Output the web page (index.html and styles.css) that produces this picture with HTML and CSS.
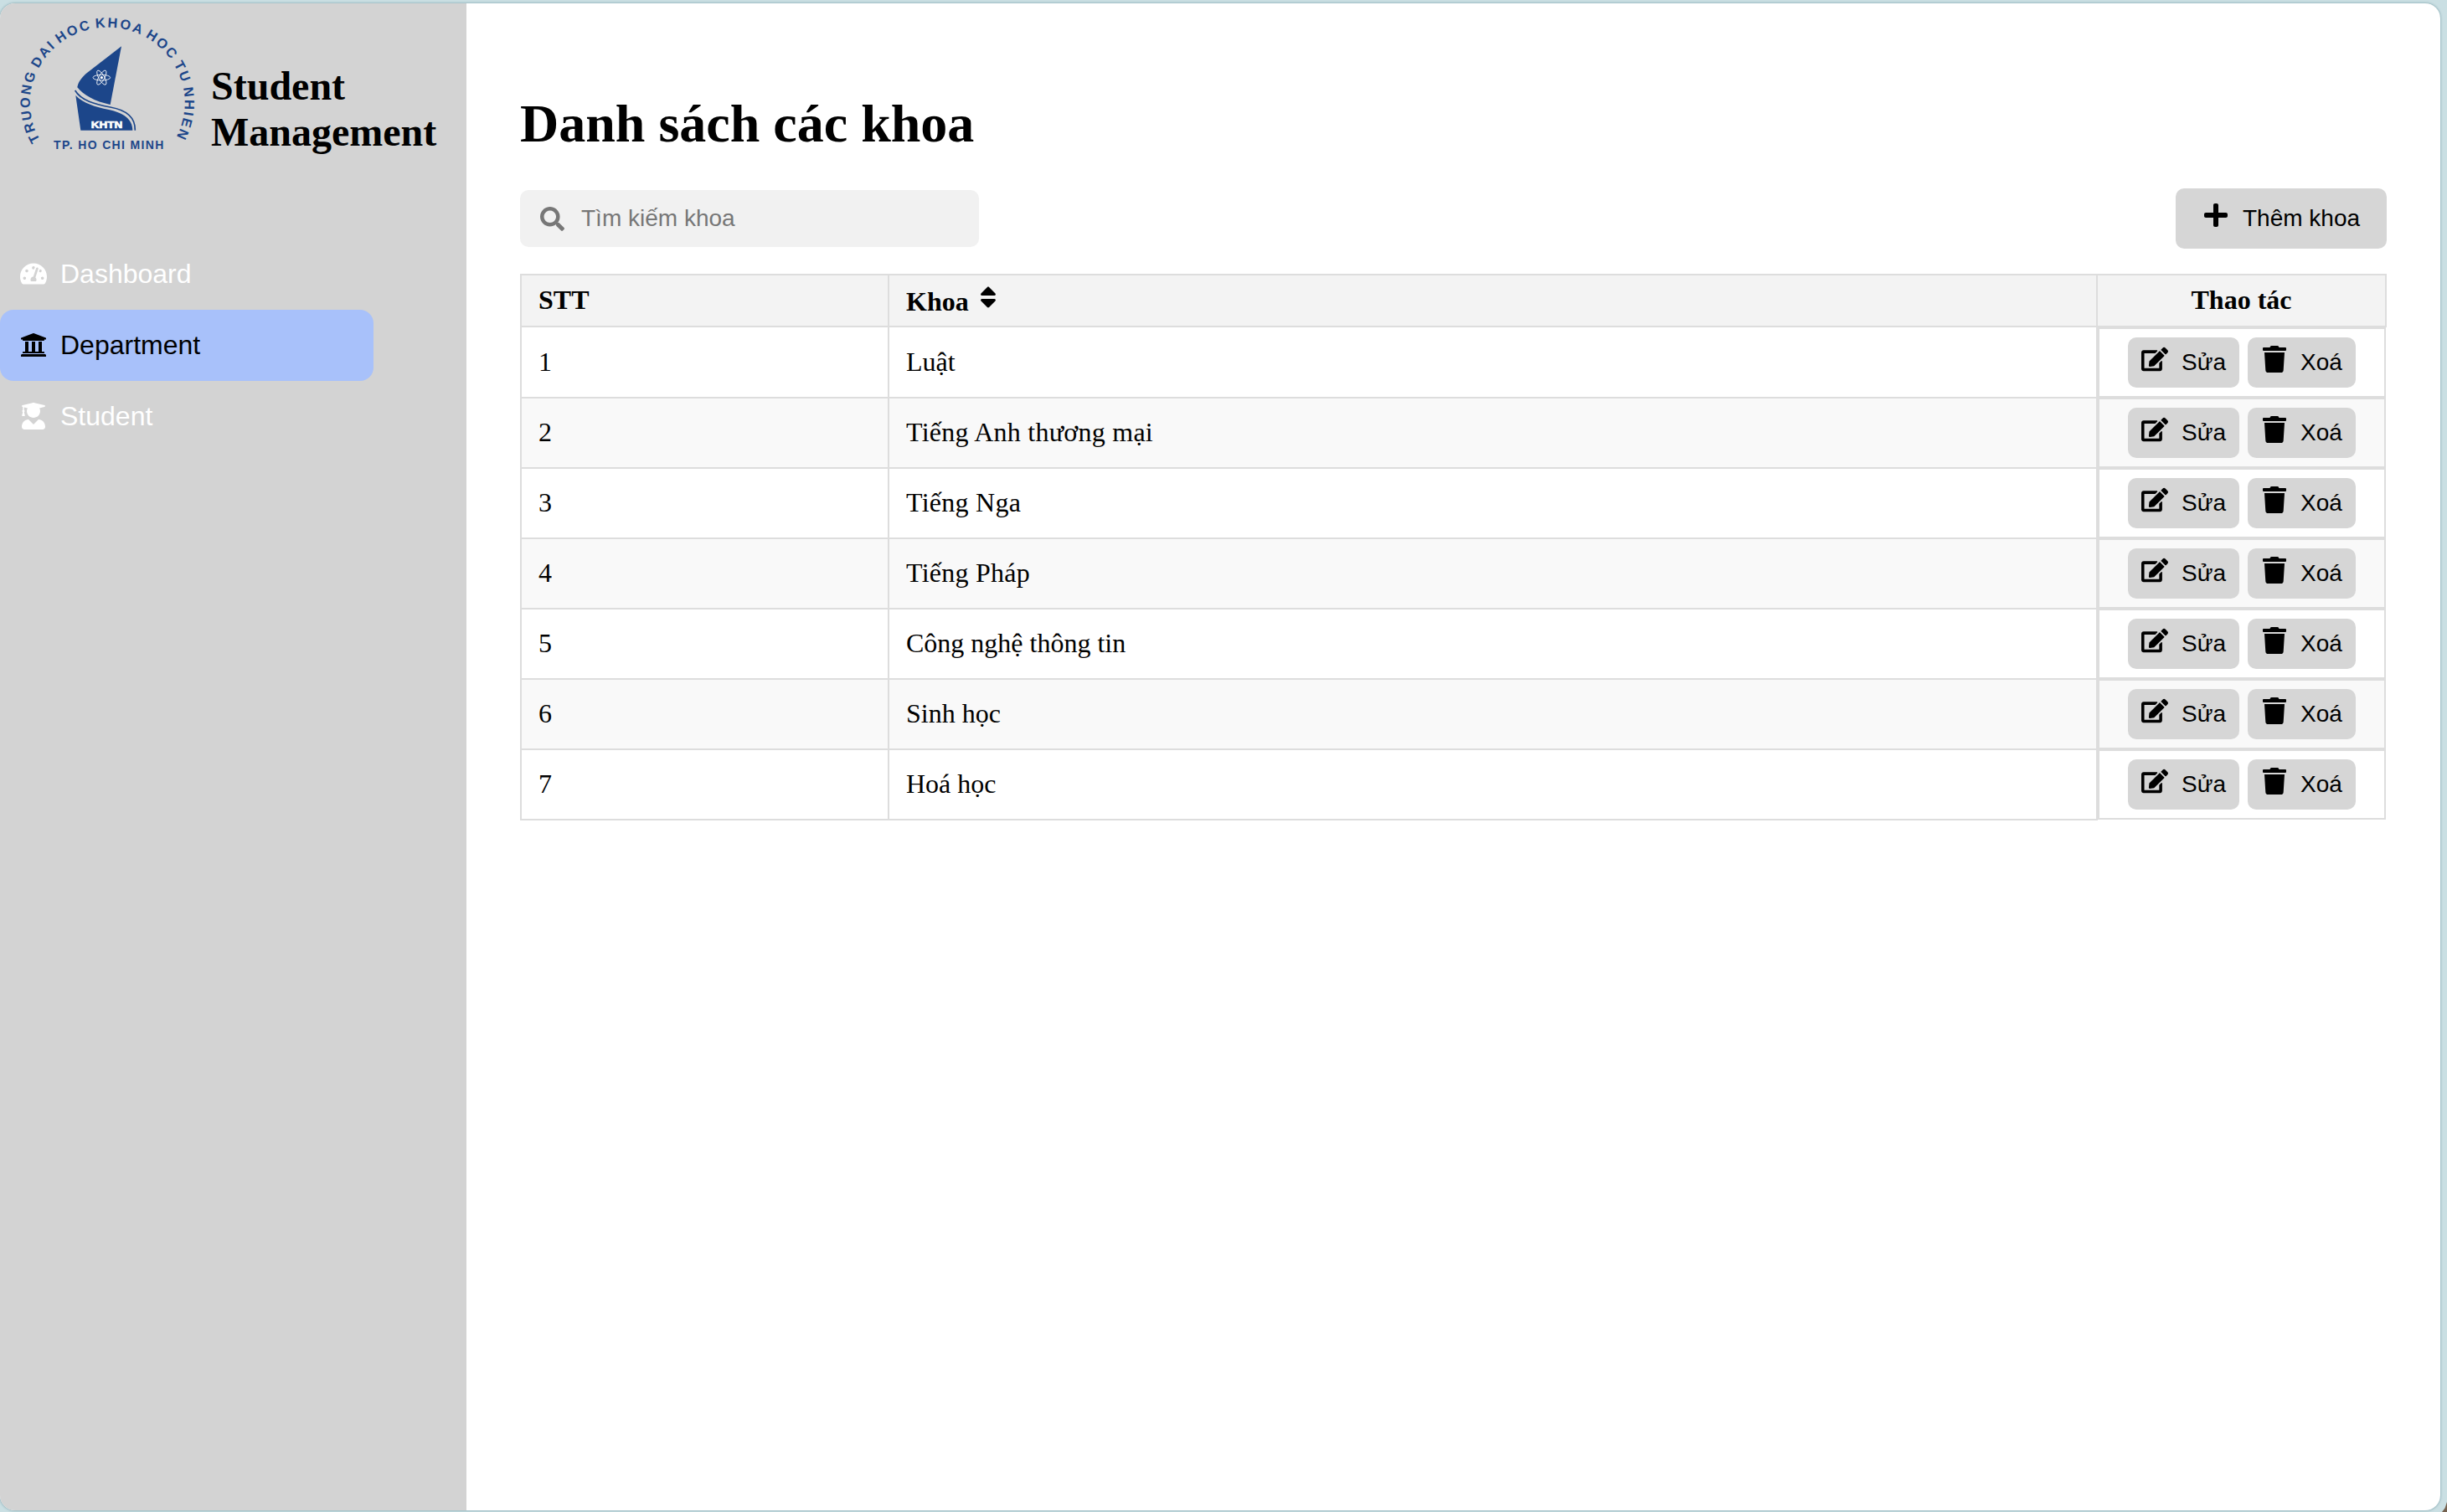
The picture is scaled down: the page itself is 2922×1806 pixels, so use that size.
FILE: index.html
```html
<!DOCTYPE html>
<html lang="vi">
<head>
<meta charset="utf-8">
<title>Student Management</title>
<link rel="stylesheet" href="styles.css">
</head>
<body>
<svg class="sprite" aria-hidden="true">
  <symbol id="gauge" viewBox="0 0 576 512"><path d="M288 32C128.94 32 0 160.94 0 320c0 52.8 14.25 102.26 39.06 144.8 5.61 9.62 16.3 15.2 27.44 15.2h443c11.14 0 21.83-5.58 27.44-15.2C561.75 422.26 576 372.8 576 320c0-159.06-128.94-288-288-288zm0 64c14.71 0 26.58 10.13 30.32 23.65-1.11 2.26-2.64 4.23-3.45 6.67l-9.22 27.67c-5.13 3.49-10.97 6.01-17.64 6.01-17.67 0-32-14.33-32-32S270.33 96 288 96zM96 384c-17.67 0-32-14.33-32-32s14.33-32 32-32 32 14.33 32 32-14.33 32-32 32zm48-160c-17.67 0-32-14.33-32-32s14.33-32 32-32 32 14.33 32 32-14.33 32-32 32zm246.77-72.41l-61.33 184C343.13 347.33 352 364.54 352 384c0 11.72-3.38 22.55-8.88 32H232.88c-5.5-9.45-8.88-20.28-8.88-32 0-33.94 26.5-61.43 59.9-63.59l61.34-184.01c4.17-12.56 17.73-19.45 30.36-15.17 12.57 4.19 19.35 17.79 15.17 30.36zm14.66 57.2l15.52-46.55c3.47-1.29 7.13-2.23 11.05-2.23 17.67 0 32 14.33 32 32s-14.33 32-32 32c-11.38-.01-20.89-6.28-26.57-15.22zM480 384c-17.67 0-32-14.33-32-32s14.33-32 32-32 32 14.33 32 32-14.33 32-32 32z"/></symbol>
  <symbol id="university" viewBox="0 0 512 512"><path d="M496 128v16a8 8 0 0 1-8 8h-24v12c0 6.627-5.373 12-12 12H60c-6.627 0-12-5.373-12-12v-12H24a8 8 0 0 1-8-8v-16a8 8 0 0 1 4.941-7.392l232-88a7.996 7.996 0 0 1 6.118 0l232 88A8 8 0 0 1 496 128zm-24 304H40c-13.255 0-24 10.745-24 24v16a8 8 0 0 0 8 8h464a8 8 0 0 0 8-8v-16c0-13.255-10.745-24-24-24zM96 192v192H60c-6.627 0-12 5.373-12 12v20h416v-20c0-6.627-5.373-12-12-12h-36V192h-64v192h-64V192h-64v192h-64V192H96z"/></symbol>
  <symbol id="graduate" viewBox="0 0 448 512"><path d="M319.4 320.6L224 416l-95.4-95.4C57.1 323.7 0 382.2 0 454.4v9.6c0 26.5 21.5 48 48 48h352c26.5 0 48-21.5 48-48v-9.6c0-72.2-57.1-130.7-128.6-133.8zM13.6 79.8l6.4 1.5v58.4c-7 4.2-12 11.5-12 20.3 0 8.4 4.6 15.4 11.1 19.7L3.5 242c-1.7 6.9 2.1 14 7.6 14h41.8c5.5 0 9.3-7.1 7.6-14l-15.6-62.3C51.4 175.4 56 168.4 56 160c0-8.8-5-16.1-12-20.3V87.1l66 15.9c-8.6 17.2-14 36.4-14 57 0 70.7 57.3 128 128 128s128-57.3 128-128c0-20.6-5.3-39.8-14-57l96.3-23.2c18.2-4.4 18.2-27.1 0-31.5l-190.4-46c-13-3.1-26.7-3.1-39.7 0L13.6 48.2c-18.1 4.4-18.1 27.2 0 31.6z"/></symbol>
  <symbol id="search" viewBox="0 0 512 512"><path d="M505 442.7L405.3 343c-4.5-4.5-10.6-7-17-7H372c27.6-35.3 44-79.7 44-128C416 93.1 322.9 0 208 0S0 93.1 0 208s93.1 208 208 208c48.3 0 92.7-16.4 128-44v16.3c0 6.4 2.5 12.5 7 17l99.7 99.7c9.4 9.4 24.6 9.4 33.9 0l28.3-28.3c9.4-9.4 9.4-24.6.1-34zM208 336c-70.7 0-128-57.2-128-128 0-70.7 57.2-128 128-128 70.7 0 128 57.2 128 128 0 70.7-57.2 128-128 128z"/></symbol>
  <symbol id="plus" viewBox="0 0 448 512"><path d="M416 208H272V64c0-17.67-14.33-32-32-32h-32c-17.67 0-32 14.33-32 32v144H32c-17.67 0-32 14.33-32 32v32c0 17.67 14.33 32 32 32h144v144c0 17.67 14.33 32 32 32h32c17.67 0 32-14.33 32-32V304h144c17.67 0 32-14.33 32-32v-32c0-17.67-14.33-32-32-32z"/></symbol>
  <symbol id="sort" viewBox="0 0 320 512"><path d="M41 288h238c21.4 0 32.1 25.9 17 41L177 448c-9.4 9.4-24.6 9.4-33.9 0L24 329c-15.1-15.1-4.4-41 17-41zm255-105L177 64c-9.4-9.4-24.6-9.4-33.9 0L24 183c-15.1 15.1-4.4 41 17 41h238c21.4 0 32.1-25.9 17-41z"/></symbol>
  <symbol id="edit" viewBox="0 0 576 512"><path d="M402.6 83.2l90.2 90.2c3.8 3.8 3.8 10 0 13.8L274.4 405.6l-92.8 10.3c-12.4 1.4-22.9-9.1-21.5-21.5l10.3-92.8L388.8 83.2c3.8-3.8 10-3.8 13.8 0zm162-22.9l-48.8-48.8c-15.2-15.2-39.9-15.2-55.2 0l-35.4 35.4c-3.8 3.8-3.8 10 0 13.8l90.2 90.2c3.8 3.8 10 3.8 13.8 0l35.4-35.4c15.2-15.3 15.2-40 0-55.2zM384 346.2V448H64V128h229.8c3.2 0 6.2-1.3 8.5-3.5l40-40c7.6-7.6 2.2-20.5-8.5-20.5H48C21.5 64 0 85.5 0 112v352c0 26.5 21.5 48 48 48h352c26.5 0 48-21.5 48-48V306.2c0-10.7-12.9-16-20.5-8.5l-40 40c-2.2 2.3-3.5 5.3-3.5 8.5z"/></symbol>
  <symbol id="trash" viewBox="0 0 448 512"><path d="M432 32H312l-9.4-18.7A24 24 0 0 0 281.1 0H166.8a23.72 23.72 0 0 0-21.4 13.3L136 32H16A16 16 0 0 0 0 48v32a16 16 0 0 0 16 16h416a16 16 0 0 0 16-16V48a16 16 0 0 0-16-16zM53.2 467a48 48 0 0 0 47.9 45h245.8a48 48 0 0 0 47.9-45L416 128H32z"/></symbol>
</svg>
<div class="window">
  <aside class="sidebar">
    <div class="brand">
      <svg class="logo" viewBox="60 60 648 492">
        <path id="ring" d="M144 502 A277 270 0 1 1 624 504" fill="none"/>
        <text class="ring-text"><textPath href="#ring" textLength="1126" lengthAdjust="spacing">TRUONG DAI HOC KHOA HOC TU NHIEN</textPath></text>
        <path class="ink" d="M435 166 L395 375 C340 364 298 340 277 313 C279 296 291 280 308 264 Z"/>
        <path class="ink" d="M271 342 C300 372 340 382 390 393 C440 404 475 425 475 467 L289 467 Z"/>
        <path class="stripe" d="M269 324 C290 360 340 374 395 384 C452 394 485 420 484 467"/>
        <g class="atom" transform="translate(364 278)">
          <ellipse rx="31" ry="10"/>
          <ellipse rx="29" ry="10" transform="rotate(60)"/>
          <ellipse rx="29" ry="10" transform="rotate(120)"/>
          <circle r="5"/>
        </g>
        <text class="badge-text" x="326" y="459" textLength="113" lengthAdjust="spacingAndGlyphs">KHTN</text>
        <text class="city-text" x="192" y="533" textLength="394">TP. HO CHI MINH</text>
      </svg>
      <h2 class="brand-name">Student Management</h2>
    </div>
    <nav class="nav">
      <a class="nav-item"><svg class="icon"><use href="#gauge"/></svg>Dashboard</a>
      <a class="nav-item active"><svg class="icon"><use href="#university"/></svg>Department</a>
      <a class="nav-item"><svg class="icon"><use href="#graduate"/></svg>Student</a>
    </nav>
  </aside>
  <main class="main">
    <h1 class="page-title">Danh sách các khoa</h1>
    <div class="toolbar">
      <label class="search"><svg class="icon search-icon"><use href="#search"/></svg><span>Tìm kiếm khoa</span></label>
      <button class="btn add"><svg class="icon"><use href="#plus"/></svg>Thêm khoa</button>
    </div>
    <table class="table">
      <colgroup><col class="col-index"><col class="col-name"><col class="col-action"></colgroup>
      <thead>
        <tr><th>STT</th><th class="sortable">Khoa <svg class="sort-icon"><use href="#sort"/></svg></th><th class="center">Thao tác</th></tr>
      </thead>
      <tbody>
        <tr><td>1</td><td>Luật</td><td class="actions"><button class="btn edit"><svg class="icon"><use href="#edit"/></svg>Sửa</button><button class="btn remove"><svg class="icon"><use href="#trash"/></svg>Xoá</button></td></tr>
        <tr><td>2</td><td class="loose">Tiếng Anh thương mại</td><td class="actions"><button class="btn edit"><svg class="icon"><use href="#edit"/></svg>Sửa</button><button class="btn remove"><svg class="icon"><use href="#trash"/></svg>Xoá</button></td></tr>
        <tr><td>3</td><td class="loose">Tiếng Nga</td><td class="actions"><button class="btn edit"><svg class="icon"><use href="#edit"/></svg>Sửa</button><button class="btn remove"><svg class="icon"><use href="#trash"/></svg>Xoá</button></td></tr>
        <tr><td>4</td><td class="loose">Tiếng Pháp</td><td class="actions"><button class="btn edit"><svg class="icon"><use href="#edit"/></svg>Sửa</button><button class="btn remove"><svg class="icon"><use href="#trash"/></svg>Xoá</button></td></tr>
        <tr><td>5</td><td>Công nghệ thông tin</td><td class="actions"><button class="btn edit"><svg class="icon"><use href="#edit"/></svg>Sửa</button><button class="btn remove"><svg class="icon"><use href="#trash"/></svg>Xoá</button></td></tr>
        <tr><td>6</td><td>Sinh học</td><td class="actions"><button class="btn edit"><svg class="icon"><use href="#edit"/></svg>Sửa</button><button class="btn remove"><svg class="icon"><use href="#trash"/></svg>Xoá</button></td></tr>
        <tr><td>7</td><td>Hoá học</td><td class="actions"><button class="btn edit"><svg class="icon"><use href="#edit"/></svg>Sửa</button><button class="btn remove"><svg class="icon"><use href="#trash"/></svg>Xoá</button></td></tr>
      </tbody>
    </table>
  </main>
</div>
</body>
</html>
```
FILE: styles.css
```css
* { box-sizing: border-box; }
body {
  margin: 0;
  height: 1806px;
  padding: 4px 8px 2px 0;
  overflow: hidden;
  background: #cadfe3;
  font-family: "Liberation Serif", "Times New Roman", serif;
  font-size: 32px;
  color: #000;
}
/* desktop showing past the rounded browser corner */
body::after {
  content: "";
  position: absolute;
  right: 0;
  bottom: 0;
  width: 6px;
  height: 12px;
  background: #75614f;
  clip-path: polygon(100% 0, 100% 100%, 0 100%, 60% 60%);
}
.sprite { display: none; }
.icon { width: 32px; height: 32px; flex: none; fill: currentColor; }

.window {
  display: flex;
  height: 1800px;
  border-radius: 18px;
  overflow: hidden;
  background: #fff;
  box-shadow: 0 0 3px rgba(20, 80, 95, .5);
}
.sidebar {
  width: 557px;
  flex: none;
  background: #d3d3d3;
}
.brand {
  display: flex;
  gap: 16px;
  height: 281px;
  padding: 16px 19px 0 20px;
}
.logo { width: 216px; height: 164px; flex: none; overflow: visible; fill: #1c468a; }
.logo text { font-family: "Liberation Sans", Arial, sans-serif; font-weight: bold; }
.ring-text { font-size: 49px; word-spacing: -8px; }
.city-text { font-size: 42px; }
.logo .badge-text { font-size: 35px; font-weight: bold; fill: #fff; stroke: #fff; stroke-width: 2; }
.stripe { fill: none; stroke: #1c468a; stroke-width: 5; }
.atom ellipse { fill: none; stroke: #fff; stroke-width: 2.5; }
.atom circle { fill: #fff; }
.brand-name {
  width: 290px;
  margin: 55px 0 0;
  font-size: 48px;
  line-height: 55px;
}
.nav-item {
  display: flex;
  align-items: center;
  gap: 16px;
  width: 446px;
  height: 85px;
  padding-left: 24px;
  border-radius: 16px;
  color: #fff;
  font-family: "Liberation Sans", Arial, sans-serif;
  font-size: 32px;
}
.nav-item .icon { margin-bottom: 2px; }
.nav-item.active { background: #a8c1fa; color: #000; }

.main { flex: 1; padding: 107px 64px 0; }
.page-title { margin: 0; height: 114px; font-size: 64px; line-height: 74px; }
.toolbar {
  display: flex;
  align-items: center;
  justify-content: space-between;
  height: 72px;
  margin-bottom: 30px;
  font-family: "Liberation Sans", Arial, sans-serif;
  font-size: 28px;
}
.search {
  display: flex;
  align-items: center;
  gap: 20px;
  width: 548px;
  height: 68px;
  padding-left: 24px;
  border-radius: 10px;
  background: #f1f1f1;
  color: #777;
}
.search-icon { width: 29px; height: 29px; }
.btn {
  display: flex;
  align-items: center;
  gap: 15px;
  height: 60px;
  padding: 0 0 0 16px;
  border: 0;
  border-radius: 10px;
  background: #d6d6d6;
  color: #000;
  font-family: "Liberation Sans", Arial, sans-serif;
  font-size: 28px;
  line-height: 32px;
}
.btn .icon { margin-bottom: 8px; }
.add { width: 252px; height: 72px; padding-left: 32px; gap: 16px; }
.edit { width: 133px; gap: 16px; }
.remove { width: 129px; }

.table {
  width: 2229px;
  table-layout: fixed;
  border-collapse: collapse;
}
.col-index { width: 439px; }
.col-name { width: 1443px; }
.col-action { width: 345px; }
th, td {
  padding: 0 20px 1px;
  border: 2px solid #ddd;
  text-align: left;
}
th { height: 62px; padding-bottom: 2px; background: #f3f3f3; }
.sortable { padding-bottom: 0; }
.center { text-align: center; }
.sort-icon { width: 20px; height: 32px; margin-left: 5px; }
.loose { letter-spacing: .25px; }
tbody tr { height: 84px; }
tbody tr:nth-child(even) { background: #f9f9f9; }
.actions {
  display: flex;
  justify-content: center;
  align-items: center;
  gap: 10px;
  height: 84px;
  padding-bottom: 0;
}
```
